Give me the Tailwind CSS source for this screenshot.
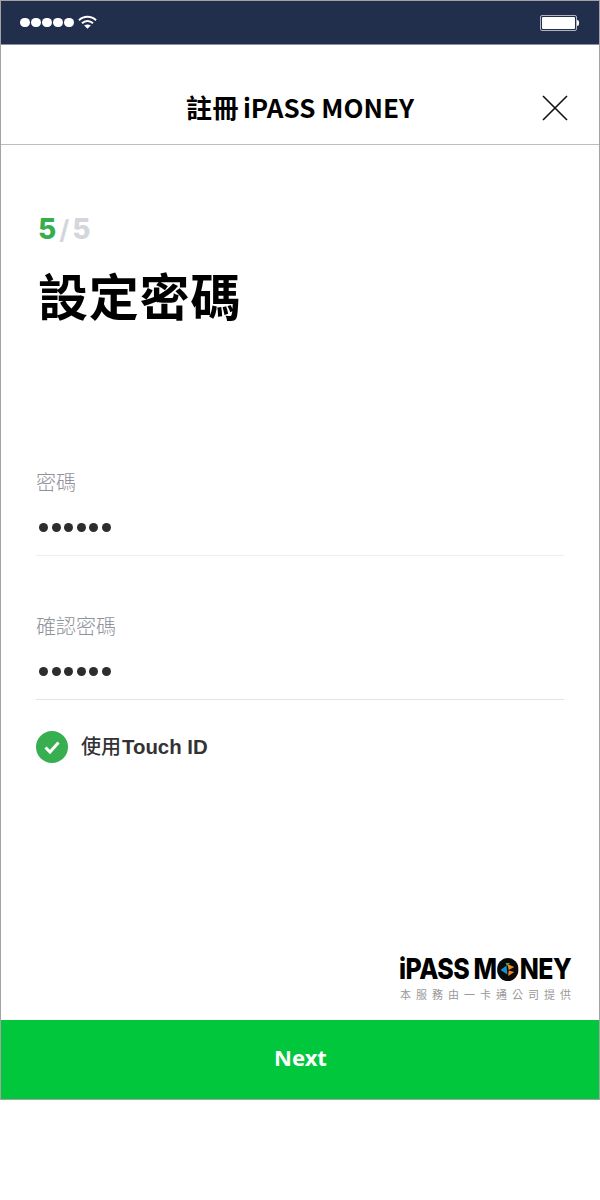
<!DOCTYPE html>
<html lang="zh-Hant"><head><meta charset="utf-8">
<script src="https://cdn.jsdelivr.net/npm/@tailwindcss/browser@4"></script>
</head>
<body class="bg-white m-0 font-['Liberation_Sans','Noto_Sans_CJK_TC',sans-serif]">
<div class="w-[600px] h-[1100px] border border-[#a3a3a3] flex flex-col box-border bg-white">
  <div class="h-[43px] bg-[#212e4c] border-b border-[#8a92a3] box-content flex items-center justify-between pl-[19px] pr-[20px] shrink-0">
    <div class="flex items-center gap-[4px]">
      <div class="flex gap-[1.5px]">
        <span class="w-[9.5px] h-[9.5px] rounded-full bg-white"></span><span class="w-[9.5px] h-[9.5px] rounded-full bg-white"></span><span class="w-[9.5px] h-[9.5px] rounded-full bg-white"></span><span class="w-[9.5px] h-[9.5px] rounded-full bg-white"></span><span class="w-[9.5px] h-[9.5px] rounded-full bg-white"></span>
      </div>
      <svg width="19" height="14" viewBox="0 0 19 14" class="-mt-[2px]" fill="none" stroke="#fff" stroke-width="2"><path d="M1 5.2C5.8 .6 13.2 .6 18 5.2"/><path d="M4 8.2C7.2 5.2 11.8 5.2 15 8.2"/><path d="M9.5 13.8L6.2 10.6C8.2 9 10.8 9 12.8 10.6Z" fill="#fff" stroke="none"/></svg>
    </div>
    <div class="flex items-center">
      <div class="w-[37px] h-[16px] rounded-[2px] border border-[#aeb4c0] bg-[#212e4c] p-[1px]"><div class="w-full h-full bg-white rounded-[1px]"></div></div>
      <div class="w-[2px] h-[6px] bg-white rounded-r-sm"></div>
    </div>
  </div>
  <div class="relative h-[100px] border-b border-[#bdbdbd] shrink-0 flex items-center justify-center pt-[25px]">
    <h1 class="text-[26px] leading-[38px] font-bold text-black font-['Noto_Sans_CJK_TC',sans-serif]"><span class="tracking-[0.5px]">註冊</span><span class="ml-[4px]">iPASS MONEY</span></h1>
    <svg class="absolute right-[31px] top-[50px]" width="26" height="26" viewBox="0 0 26 26" stroke="#111" stroke-width="1.6"><path d="M1 1L25 25M25 1L1 25"/></svg>
  </div>
  <div class="flex-1 flex flex-col">
    <div class="pl-[37px] pt-[66px] flex items-baseline text-[28px] leading-[36px] font-extrabold font-['Inter','Liberation_Sans',sans-serif]">
      <span class="text-[#35ae4e]">5</span><span class="text-[#d4d6dc] font-bold text-[26px] mx-[3px]">/</span><span class="text-[#d4d6dc]">5</span>
    </div>
    <h2 class="pl-[37px] mt-[13px] text-[50px] leading-[66px] font-bold text-black font-['Noto_Sans_CJK_TC',sans-serif] tracking-[0.8px]">設定密碼</h2>
    <div class="mx-[35px] mt-[141px] h-[88px] border-b border-[#eeeeee] flex flex-col">
      <label class="text-[20px] leading-[28px] text-[#8f919b] font-light font-['Noto_Sans_CJK_TC',sans-serif]">密碼</label>
      <div class="mt-[27px] pl-[3px] flex gap-[3.5px]">
        <span class="w-[9px] h-[9px] rounded-full bg-[#2d2d2f]"></span><span class="w-[9px] h-[9px] rounded-full bg-[#2d2d2f]"></span><span class="w-[9px] h-[9px] rounded-full bg-[#2d2d2f]"></span><span class="w-[9px] h-[9px] rounded-full bg-[#2d2d2f]"></span><span class="w-[9px] h-[9px] rounded-full bg-[#2d2d2f]"></span><span class="w-[9px] h-[9px] rounded-full bg-[#2d2d2f]"></span>
      </div>
    </div>
    <div class="mx-[35px] mt-[56px] h-[88px] border-b border-[#e4e4e4] flex flex-col">
      <label class="text-[20px] leading-[28px] text-[#8f919b] font-light font-['Noto_Sans_CJK_TC',sans-serif]">確認密碼</label>
      <div class="mt-[27px] pl-[3px] flex gap-[3.5px]">
        <span class="w-[9px] h-[9px] rounded-full bg-[#2d2d2f]"></span><span class="w-[9px] h-[9px] rounded-full bg-[#2d2d2f]"></span><span class="w-[9px] h-[9px] rounded-full bg-[#2d2d2f]"></span><span class="w-[9px] h-[9px] rounded-full bg-[#2d2d2f]"></span><span class="w-[9px] h-[9px] rounded-full bg-[#2d2d2f]"></span><span class="w-[9px] h-[9px] rounded-full bg-[#2d2d2f]"></span>
      </div>
    </div>
    <div class="ml-[35px] mt-[30px] flex items-center gap-[13px]">
      <svg width="32" height="32" viewBox="0 0 32 32"><circle cx="16" cy="16" r="16" fill="#37ae50"/><path d="M9.5 16.5L14 21L22.5 11.5" fill="none" stroke="#fff" stroke-width="3"/></svg>
      <span class="text-[20.4px] leading-[32px] font-bold text-[#333336] font-['Liberation_Sans','Noto_Sans_CJK_TC',sans-serif]"><span class="text-[20px] font-medium font-['Noto_Sans_CJK_TC',sans-serif] mr-[1px]">使用</span>Touch ID</span>
    </div>
    <div class="mt-auto mb-[18px] self-end mr-[28px] flex flex-col items-end">
      <div class="flex items-center h-[30px] mb-[2px] text-[29px] leading-[30px] font-extrabold text-black font-['Inter',sans-serif] tracking-[-0.6px] scale-x-[0.86] origin-right">
        <span>iPASS</span><span class="ml-[5px]">M</span>
        <svg class="mx-[1px]" width="25" height="23" viewBox="0 0 25 23"><ellipse cx="12.5" cy="11.5" rx="12.5" ry="11.5" fill="#0a0a0a"/><path d="M4 12L11 7.5L12 16.5Z" fill="#1592d6"/><path d="M12 6L20 9L13.5 12Z" fill="#f08a1d"/><path d="M13.5 12.5L20 14L13 18Z" fill="#f08a1d"/><path d="M10 5L15 5L11.5 8Z" fill="#3cb54a"/></svg>
        <span>NEY</span>
      </div>
      <div class="text-[11px] leading-[16px] text-[#999999] tracking-[5px] mr-[-5px] font-['Noto_Sans_CJK_TC',sans-serif]">本服務由一卡通公司提供</div>
    </div>
  </div>
  <button class="h-[79px] shrink-0 bg-[#00c73c] text-white text-[22px] font-bold font-['Noto_Sans',sans-serif] pb-[4px] pl-[1px]">Next</button>
</div>
</body></html>
